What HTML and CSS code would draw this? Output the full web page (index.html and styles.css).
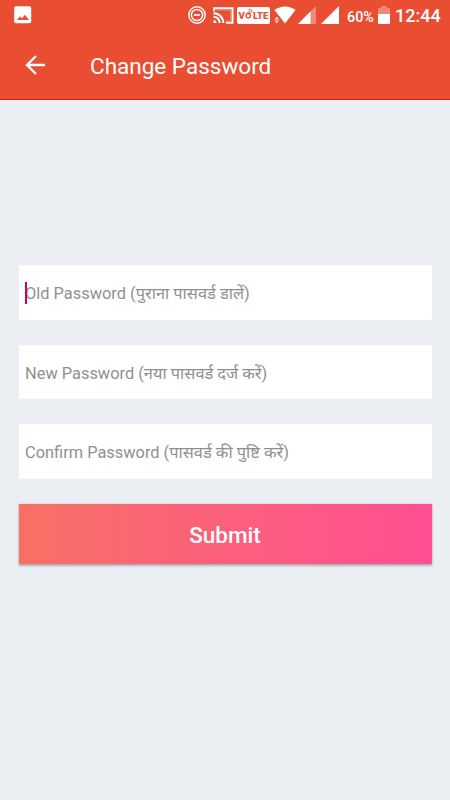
FILE: index.html
```html
<!DOCTYPE html>
<html lang="en">
<head>
<meta charset="utf-8">
<meta name="viewport" content="width=device-width, initial-scale=1">
<title>Change Password</title>
<link rel="stylesheet" href="styles.css">
</head>
<body>
<header class="header">
  <div class="status">
    <svg class="photo" width="18" height="18" viewBox="0 0 18 18"><rect x=".2" y=".2" width="17" height="17" rx="2" fill="#fff"/><path d="M3 14l3-3.700 2 2.200 2.800-3.800L15 14z" fill="#e94e32"/></svg>
    <svg class="dnd" width="18" height="18" viewBox="0 0 18 18" fill="none" stroke="#fff"><circle cx="9" cy="9" r="8.200" stroke-width="1.400"/><circle cx="9" cy="9" r="5.600" stroke-width="1.500"/><path d="M6 9h6" stroke-width="1.800"/></svg>
    <svg class="cast" width="21" height="17" viewBox="0 0 21 17" fill="none" stroke="#fff"><path d="M1.200 4.500V1.200h18.400v14.600H13" stroke-width="1.800"/><path d="M3 2.800h15v11.500H13" stroke-width="1.400" stroke-opacity=".35"/><path d="M.5 6.200a9.800 9.800 0 0 1 9.800 9.800M.5 9.700a6.300 6.300 0 0 1 6.300 6.300" stroke-width="2"/><path d="M.5 13a3 3 0 0 1 3 3h-3z" fill="#fff" stroke="none"/></svg>
    <div class="volte"><span>V</span><svg width="8" height="13" viewBox="0 0 8 13" fill="none" stroke="#e94e32"><circle cx="3.200" cy="8.700" r="2.200" stroke-width="1.400"/><path d="M2.500 5.600l2-1.100 1.200 2M3.500 2.700c2-.8 3.700.6 3.500 2.700" stroke-width="1"/></svg><span>LTE</span></div>
    <svg class="wifi" width="22" height="18" viewBox="0 0 22 18" fill="#fff"><path d="M.5 4C6.500-.8 15.500-.8 21.500 4L11 17.500z"/><path d="M0 10.500h5.500v7H0z" fill="#e94e32"/><path d="M.5 13.500l2.300-3 2.300 3zM.5 14.500h4.600l-2.300 3z" fill-opacity=".8"/></svg>
    <svg class="signal" width="18" height="18" viewBox="0 0 18 18" fill="#fff"><path d="M0 18L18 0v18z" fill-opacity=".35"/><path d="M0 18L12.500 5.500V18z"/></svg>
    <svg class="signal-full" width="18" height="18" viewBox="0 0 18 18"><path d="M0 18L18 0v18z" fill="#fff"/></svg>
    <span class="percent">60%</span>
    <svg class="battery" width="12" height="18" viewBox="0 0 12 18" fill="#fff"><path d="M0 8V3q0-1 1-1h2V0h6v2h2q1 0 1 1v5z" fill-opacity=".33"/><path d="M0 8h12v9q0 1-1 1H1q-1 0-1-1z"/></svg>
    <time class="time">12:44</time>
  </div>
  <div class="toolbar">
    <svg class="back" width="20" height="20" viewBox="0 0 20 20" fill="none" stroke="#fff" stroke-width="2.400"><path d="M20 10H2M11 1L2 10l9 9"/></svg>
    <h1 class="title">Change Password</h1>
  </div>
</header>
<main class="form">
  <div class="field"><i class="caret"></i><span class="hint">Old Password (पुराना पासवर्ड डालें)</span></div>
  <div class="field"><span class="hint">New Password (नया पासवर्ड दर्ज करें)</span></div>
  <div class="field"><span class="hint">Confirm Password (पासवर्ड की पुष्टि करें)</span></div>
  <button class="submit" type="button">Submit</button>
</main>
</body>
</html>
```
FILE: styles.css
```css
* { box-sizing: border-box; }
body {
  margin: 0;
  height: 800px;
  overflow: hidden;
  background: #ebeff4;
  font-family: Roboto, "Noto Sans Devanagari", "Noto Sans", sans-serif;
}
svg { display: block; flex: none; }
.header {
  height: 100px;
  background: #e94e32;
  border-bottom: 1px solid #d8200f;
  color: #fff;
}
.status {
  display: flex;
  align-items: center;
  height: 30px;
  padding-left: 14px;
}
.dnd { margin-left: 156px; }
.cast { margin-left: 7px; }
.volte {
  display: flex;
  align-items: center;
  justify-content: center;
  flex: none;
  width: 33px;
  height: 17px;
  margin-left: 3px;
  border-radius: 2px;
  background: #fff;
  color: #e94e32;
  font-size: 9.5px;
  font-weight: 900;
  line-height: 17px;
}
.volte svg { margin-top: -3px; }
.wifi { margin-left: 4px; }
.signal { margin-left: 2px; }
.signal-full { margin-left: 5px; }
.percent {
  width: 31px;
  margin: 3px 0 0 8px;
  font-size: 14.3px;
  font-weight: 500;
  line-height: 18px;
}
.time {
  margin: 2px 0 0 5px;
  font-size: 18px;
  font-weight: 500;
  line-height: 20px;
}
.toolbar {
  display: flex;
  align-items: center;
  height: 70px;
  padding-left: 25px;
}
.title {
  margin: 2px 0 0 45px;
  font-size: 22.5px;
  font-weight: 400;
  line-height: 28px;
}
.form {
  display: flex;
  flex-direction: column;
  gap: 25px;
  padding: 165px 18.5px 0;
}
.field {
  position: relative;
  display: flex;
  align-items: center;
  height: 54.7px;
  padding: 3px 0 0 6.5px;
  border-radius: 1px;
  background: #fff;
}
.hint {
  color: #909090;
  font-size: 16.4px;
  line-height: 24px;
  white-space: nowrap;
}
.caret {
  position: absolute;
  left: 6.5px;
  top: 17px;
  width: 2px;
  height: 22px;
  background: #d10058;
}
.submit {
  height: 60px;
  padding: 2px 0 0;
  border: 0;
  background: linear-gradient(90deg, #f87064, #ff4f93);
  box-shadow: 0 2px 2px rgba(0, 0, 0, .24), 0 0 2px rgba(0, 0, 0, .16);
  color: #fff;
  font: 500 22.5px/28px Roboto, sans-serif;
}
```
